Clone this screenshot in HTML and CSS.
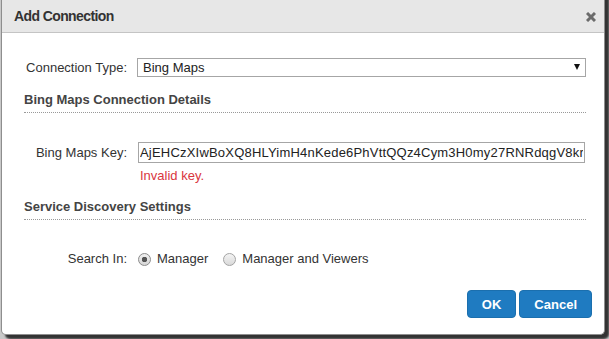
FILE: index.html
```html
<!DOCTYPE html>
<html lang="en">
<head>
    <meta charset="UTF-8">
    <meta name="viewport" content="width=device-width, initial-scale=1.0">
    <title>Add Connection</title>
    <link rel="stylesheet" href="styles.css">
</head>
<body>
    <div class="dialog">
        <div class="dialog-header">
            <h1>Add Connection</h1>
            <button class="close-btn" title="Close">
                <svg width="10" height="10" viewBox="0 0 10 10">
                    <path d="M1 1 L9 9 M9 1 L1 9" stroke="#6b6b6b" stroke-width="3" fill="none"/>
                </svg>
            </button>
        </div>
        <div class="dialog-body">
            <div class="form-row first-row">
                <label class="form-label">Connection Type:</label>
                <div class="select-box">
                    <select class="type-select">
                        <option>Bing Maps</option>
                    </select>
                    <span class="select-arrow"></span>
                </div>
            </div>

            <h2 class="section-title">Bing Maps Connection Details</h2>

            <div class="form-row key-row">
                <label class="form-label">Bing Maps Key:</label>
                <input class="key-input" type="text" value="AjEHCzXIwBoXQ8HLYimH4nKede6PhVttQQz4Cym3H0my27RNRdqgV8kr">
            </div>
            <p class="error-text">Invalid key.</p>

            <h2 class="section-title">Service Discovery Settings</h2>

            <div class="form-row search-row">
                <label class="form-label">Search In:</label>
                <label class="radio-option"><input type="radio" name="searchIn" checked> Manager</label>
                <label class="radio-option"><input type="radio" name="searchIn"> Manager and Viewers</label>
            </div>
        </div>
        <div class="dialog-footer">
            <button class="btn">OK</button>
            <button class="btn">Cancel</button>
        </div>
    </div>
</body>
</html>
```

FILE: styles.css
```css
html, body {
    height: 100%;
}
body {
    margin: 0;
    background-color: #c9c9c9;
    font-family: "Liberation Sans", Arial, sans-serif;
    font-size: 13px;
    color: #333;
    overflow: hidden;
}
.dialog {
    box-sizing: border-box;
    width: 604px;
    height: 341px;
    margin: -6px 0 0 1px;
    background-color: #fff;
    border: 1px solid #8e8e8e;
    border-top: none;
    border-radius: 0 0 5px 5px;
    box-shadow: 4px 4px 2px rgba(0, 0, 0, 0.75);
    display: flex;
    flex-direction: column;
}
.dialog-header {
    height: 39px;
    box-sizing: border-box;
    padding: 6px 8px 0 12px;
    background-color: #e7e7e7;
    border-bottom: 1px solid #c4c4c4;
    display: flex;
    align-items: center;
    justify-content: space-between;
}
.dialog-header h1 {
    margin: 0;
    font-size: 14px;
    letter-spacing: -0.6px;
    font-weight: bold;
    color: #333;
}
.close-btn {
    border: none;
    background: none;
    padding: 0;
    width: 10px;
    height: 10px;
    display: flex;
    margin-top: 1px;
}
.dialog-body {
    padding: 25px 18px 0 22px;
}
.form-row {
    display: flex;
    align-items: center;
}
.form-label {
    width: 103px;
    margin-right: 11px;
    text-align: right;
    line-height: 16px;
}
.first-row .form-label {
    margin-right: 10px;
}
.select-box {
    position: relative;
    flex: 1;
}
.type-select {
    -webkit-appearance: none;
    appearance: none;
    display: block;
    width: 100%;
    height: 19px;
    margin: 0;
    padding: 0 5px;
    border: 1px solid #a6a6a6;
    border-radius: 0;
    background: #fff;
    font-family: inherit;
    font-size: 13px;
    color: #222;
}
.select-arrow {
    position: absolute;
    right: 6px;
    top: 6px;
    width: 0;
    height: 0;
    border-left: 3.5px solid transparent;
    border-right: 3.5px solid transparent;
    border-top: 6px solid #111;
}
.section-title {
    margin: 15px 0 0;
    padding-bottom: 4px;
    font-size: 13px;
    font-weight: bold;
    line-height: 16px;
    color: #444;
    border-bottom: 1px dotted #999;
}
.key-row {
    margin-top: 29px;
}
.key-input {
    flex: 1;
    min-width: 0;
    box-sizing: border-box;
    height: 21px;
    margin: 0 1px 0 0;
    padding: 0 1px;
    border: 1px solid #a6a6a6;
    font-family: inherit;
    font-size: 13px;
    letter-spacing: 0.2px;
    color: #222;
}
.error-text {
    margin: 5px 0 0 116px;
    line-height: 15px;
    color: #d9363e;
}
.error-text + .section-title {
    margin-top: 16px;
}
.search-row {
    margin-top: 31px;
}
.radio-option {
    display: flex;
    align-items: center;
    line-height: 16px;
    margin-right: 15px;
}
.radio-option input {
    -webkit-appearance: none;
    appearance: none;
    width: 13px;
    height: 13px;
    margin: 0 6px 0 0;
    border: 1px solid #a3a3a3;
    border-radius: 50%;
    background: linear-gradient(#f4f4f4, #d9d9d9);
}
.radio-option input:checked {
    border-color: #8c8c8c;
    background: radial-gradient(circle, #555 0, #555 2.5px, transparent 3px), linear-gradient(#f0f0f0, #d6d6d6);
}
.dialog-footer {
    margin-top: auto;
    padding: 0 12px 16px 0;
    display: flex;
    justify-content: flex-end;
    gap: 3px;
}
.btn {
    height: 28px;
    padding: 0 14px;
    min-width: 48px;
    background-color: #1f7bc1;
    border: 1px solid #1b6fae;
    border-radius: 4px;
    color: #fff;
    font-family: inherit;
    font-size: 13px;
    font-weight: bold;
    cursor: pointer;
}
.btn:hover {
    background-color: #1a6fae;
}
```
